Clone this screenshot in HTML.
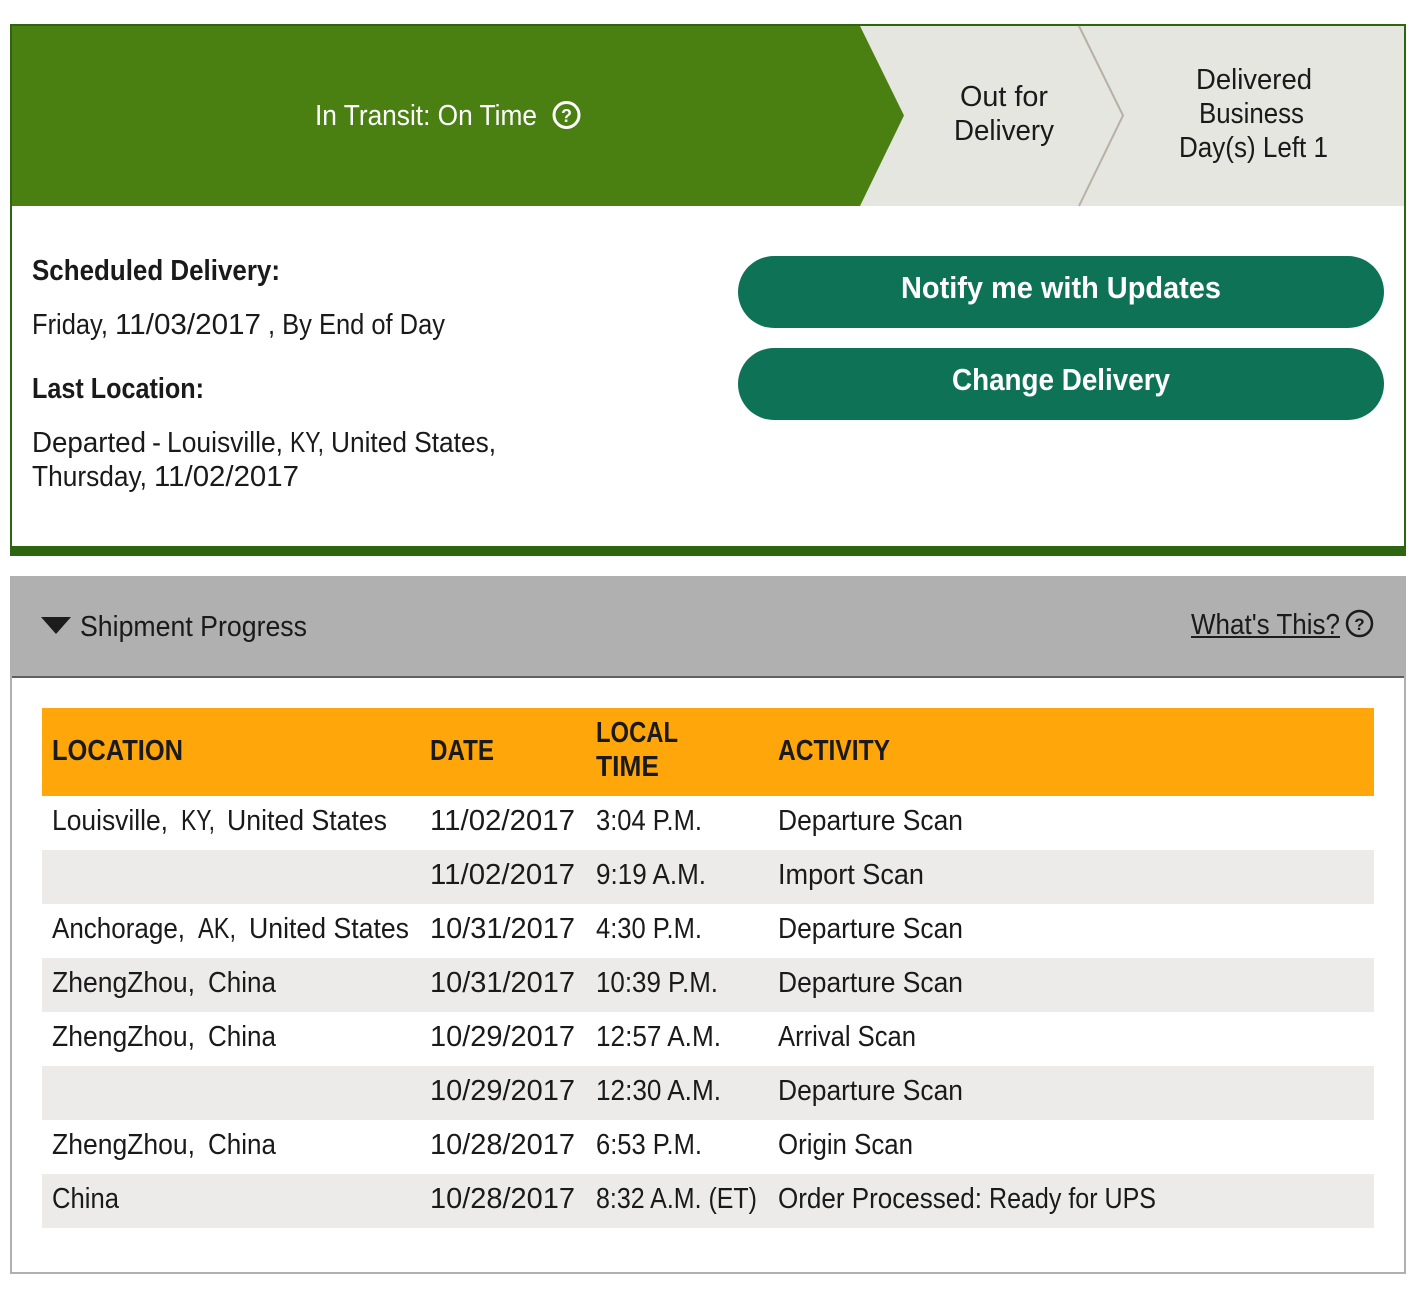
<!DOCTYPE html>
<html lang="en">
<head>
<meta charset="utf-8">
<title>Shipment Progress</title>
<style>
html,body{margin:0;padding:0;background:#fff;width:1418px;height:1292px;overflow:hidden}
svg{display:block}
text{font-family:"Liberation Sans",Arial,sans-serif;font-size:29px;fill:#1a1a1a;white-space:pre}
.b{font-weight:700}
.w{fill:#fff}
</style>
</head>
<body>
<svg width="1418" height="1292" viewBox="0 0 1418 1292" xmlns="http://www.w3.org/2000/svg">
<defs></defs>
<rect width="1418" height="1292" fill="#fff"/>

<!-- status card -->
<rect x="11" y="25" width="1394" height="526" fill="#fff" stroke="#2d6510" stroke-width="2"/>
<rect x="12" y="26" width="1392" height="180" fill="#e5e6e0"/>
<polygon points="12,26 860,26 904,115.500 860,206 12,206" fill="#4a7f12"/>
<polyline points="1079,26 1123,115.500 1079,206" fill="none" stroke="#b7b0a8" stroke-width="2"/>
<rect x="10" y="546" width="1396" height="10" fill="#2d6510"/>

<text class="w" x="315" y="125" textLength="222" lengthAdjust="spacingAndGlyphs">In Transit: On Time</text>
<circle cx="566.500" cy="115" r="12.500" fill="none" stroke="#fff" stroke-width="3"/>
<text class="w b" x="566.500" y="122" text-anchor="middle" style="font-size:18px">?</text>

<text x="960" y="106" textLength="88" lengthAdjust="spacingAndGlyphs">Out for</text>
<text x="954" y="140" textLength="100" lengthAdjust="spacingAndGlyphs">Delivery</text>
<text x="1196" y="89" textLength="116" lengthAdjust="spacingAndGlyphs">Delivered</text>
<text x="1199" y="123" textLength="105" lengthAdjust="spacingAndGlyphs">Business</text>
<text x="1179" y="157" textLength="149" lengthAdjust="spacingAndGlyphs">Day(s) Left 1</text>

<text class="b" x="32" y="280" textLength="248" lengthAdjust="spacingAndGlyphs">Scheduled Delivery:</text>
<text x="32" y="334" textLength="76" lengthAdjust="spacingAndGlyphs">Friday,</text>
<text x="115" y="334" textLength="146" lengthAdjust="spacingAndGlyphs">11/03/2017</text>
<text x="268" y="334" textLength="177" lengthAdjust="spacingAndGlyphs">, By End of Day</text>
<text class="b" x="32" y="398" textLength="172" lengthAdjust="spacingAndGlyphs">Last Location:</text>
<text x="32" y="452" textLength="114" lengthAdjust="spacingAndGlyphs">Departed</text>
<text x="152" y="452" textLength="9" lengthAdjust="spacingAndGlyphs">-</text>
<text x="167" y="452" textLength="116" lengthAdjust="spacingAndGlyphs">Louisville,</text>
<text x="290" y="452" textLength="34" lengthAdjust="spacingAndGlyphs">KY,</text>
<text x="331" y="452" textLength="165" lengthAdjust="spacingAndGlyphs">United States,</text>
<text x="32" y="486" textLength="115" lengthAdjust="spacingAndGlyphs">Thursday,</text>
<text x="154" y="486" textLength="145" lengthAdjust="spacingAndGlyphs">11/02/2017</text>

<rect x="738" y="256" width="646" height="72" rx="36" fill="#0e7356"/>
<rect x="738" y="348" width="646" height="72" rx="36" fill="#0e7356"/>
<text class="w b" x="901" y="298" textLength="320" lengthAdjust="spacingAndGlyphs" style="font-size:31px">Notify me with Updates</text>
<text class="w b" x="952" y="390" textLength="218" lengthAdjust="spacingAndGlyphs" style="font-size:31px">Change Delivery</text>

<!-- shipment panel -->
<rect x="11" y="577" width="1394" height="696" fill="#fff" stroke="#b0b0b0" stroke-width="2"/>
<rect x="10" y="576" width="1396" height="100" fill="#b0b0b0"/>
<rect x="12" y="676" width="1392" height="2" fill="#5f5f5f"/>
<polygon points="41,617 71,617 56,634" fill="#1c1c1c"/>
<text x="80" y="636" textLength="227" lengthAdjust="spacingAndGlyphs">Shipment Progress</text>
<text x="1191" y="634" textLength="149" lengthAdjust="spacingAndGlyphs">What's This?</text>
<rect x="1191" y="636" width="149" height="2" fill="#1c1c1c"/>
<circle cx="1359.500" cy="623.500" r="12.500" fill="none" stroke="#1c1c1c" stroke-width="2.500"/>
<text class="b" x="1359.500" y="630" text-anchor="middle" style="font-size:17px">?</text>

<!-- table -->
<rect x="42" y="708" width="1332" height="88" fill="#ffa60a"/>
<rect x="42" y="850" width="1332" height="54" fill="#ecebe9"/>
<rect x="42" y="958" width="1332" height="54" fill="#ecebe9"/>
<rect x="42" y="1066" width="1332" height="54" fill="#ecebe9"/>
<rect x="42" y="1174" width="1332" height="54" fill="#ecebe9"/>

<text class="b" x="52" y="760" textLength="131" lengthAdjust="spacingAndGlyphs">LOCATION</text>
<text class="b" x="430" y="760" textLength="64" lengthAdjust="spacingAndGlyphs">DATE</text>
<text class="b" x="596" y="742" textLength="82" lengthAdjust="spacingAndGlyphs">LOCAL</text>
<text class="b" x="596" y="776" textLength="63" lengthAdjust="spacingAndGlyphs">TIME</text>
<text class="b" x="778" y="760" textLength="112" lengthAdjust="spacingAndGlyphs">ACTIVITY</text>

<text x="52" y="830" textLength="116" lengthAdjust="spacingAndGlyphs">Louisville,</text>
<text x="181" y="830" textLength="34" lengthAdjust="spacingAndGlyphs">KY,</text>
<text x="227" y="830" textLength="160" lengthAdjust="spacingAndGlyphs">United States</text>
<text x="430" y="830" textLength="145" lengthAdjust="spacingAndGlyphs">11/02/2017</text>
<text x="596" y="830" textLength="106" lengthAdjust="spacingAndGlyphs">3:04 P.M.</text>
<text x="778" y="830" textLength="185" lengthAdjust="spacingAndGlyphs">Departure Scan</text>

<text x="430" y="884" textLength="145" lengthAdjust="spacingAndGlyphs">11/02/2017</text>
<text x="596" y="884" textLength="110" lengthAdjust="spacingAndGlyphs">9:19 A.M.</text>
<text x="778" y="884" textLength="146" lengthAdjust="spacingAndGlyphs">Import Scan</text>

<text x="52" y="938" textLength="133" lengthAdjust="spacingAndGlyphs">Anchorage,</text>
<text x="198" y="938" textLength="38" lengthAdjust="spacingAndGlyphs">AK,</text>
<text x="249" y="938" textLength="160" lengthAdjust="spacingAndGlyphs">United States</text>
<text x="430" y="938" textLength="145" lengthAdjust="spacingAndGlyphs">10/31/2017</text>
<text x="596" y="938" textLength="106" lengthAdjust="spacingAndGlyphs">4:30 P.M.</text>
<text x="778" y="938" textLength="185" lengthAdjust="spacingAndGlyphs">Departure Scan</text>

<text x="52" y="992" textLength="143" lengthAdjust="spacingAndGlyphs">ZhengZhou,</text>
<text x="208" y="992" textLength="68" lengthAdjust="spacingAndGlyphs">China</text>
<text x="430" y="992" textLength="145" lengthAdjust="spacingAndGlyphs">10/31/2017</text>
<text x="596" y="992" textLength="122" lengthAdjust="spacingAndGlyphs">10:39 P.M.</text>
<text x="778" y="992" textLength="185" lengthAdjust="spacingAndGlyphs">Departure Scan</text>

<text x="52" y="1046" textLength="143" lengthAdjust="spacingAndGlyphs">ZhengZhou,</text>
<text x="208" y="1046" textLength="68" lengthAdjust="spacingAndGlyphs">China</text>
<text x="430" y="1046" textLength="145" lengthAdjust="spacingAndGlyphs">10/29/2017</text>
<text x="596" y="1046" textLength="125" lengthAdjust="spacingAndGlyphs">12:57 A.M.</text>
<text x="778" y="1046" textLength="138" lengthAdjust="spacingAndGlyphs">Arrival Scan</text>

<text x="430" y="1100" textLength="145" lengthAdjust="spacingAndGlyphs">10/29/2017</text>
<text x="596" y="1100" textLength="125" lengthAdjust="spacingAndGlyphs">12:30 A.M.</text>
<text x="778" y="1100" textLength="185" lengthAdjust="spacingAndGlyphs">Departure Scan</text>

<text x="52" y="1154" textLength="143" lengthAdjust="spacingAndGlyphs">ZhengZhou,</text>
<text x="208" y="1154" textLength="68" lengthAdjust="spacingAndGlyphs">China</text>
<text x="430" y="1154" textLength="145" lengthAdjust="spacingAndGlyphs">10/28/2017</text>
<text x="596" y="1154" textLength="106" lengthAdjust="spacingAndGlyphs">6:53 P.M.</text>
<text x="778" y="1154" textLength="135" lengthAdjust="spacingAndGlyphs">Origin Scan</text>

<text x="52" y="1208" textLength="67" lengthAdjust="spacingAndGlyphs">China</text>
<text x="430" y="1208" textLength="145" lengthAdjust="spacingAndGlyphs">10/28/2017</text>
<text x="596" y="1208" textLength="161" lengthAdjust="spacingAndGlyphs">8:32 A.M. (ET)</text>
<text x="778" y="1208" textLength="204" lengthAdjust="spacingAndGlyphs">Order Processed:</text>
<text x="989" y="1208" textLength="167" lengthAdjust="spacingAndGlyphs">Ready for UPS</text>
</svg>
</body>
</html>
